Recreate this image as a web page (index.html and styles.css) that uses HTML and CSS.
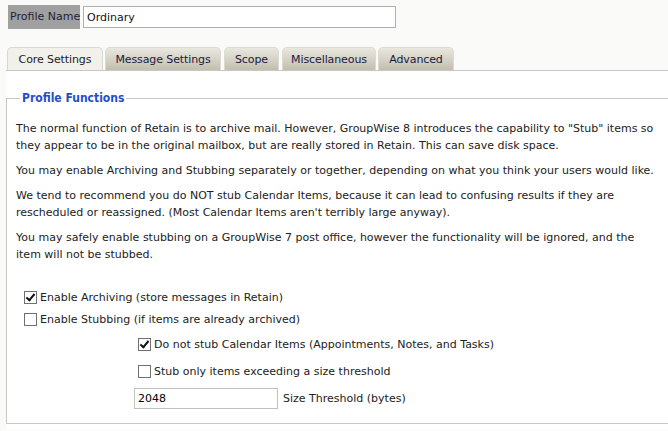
FILE: index.html
```html
<!DOCTYPE html>
<html>
<head>
<meta charset="utf-8">
<link rel="stylesheet" href="styles.css">
</head>
<body>
<div class="top">
  <label class="name-label">Profile Name</label>
  <input class="name-input" type="text" value="Ordinary">
</div>
<div class="tabs">
  <div class="tab active t-core">Core Settings</div>
  <div class="tab t-msg">Message Settings</div>
  <div class="tab t-scope">Scope</div>
  <div class="tab t-misc">Miscellaneous</div>
  <div class="tab t-adv">Advanced</div>
</div>
<div class="panel">
  <fieldset class="group">
    <legend>Profile Functions</legend>
    <p>The normal function of Retain is to archive mail. However, GroupWise 8 introduces the capability to "Stub" items so they appear to be in the original mailbox, but are really stored in Retain. This can save disk space.</p>
    <p>You may enable Archiving and Stubbing separately or together, depending on what you think your users would like.</p>
    <p>We tend to recommend you do NOT stub Calendar Items, because it can lead to confusing results if they are rescheduled or reassigned. (Most Calendar Items aren't terribly large anyway).</p>
    <p>You may safely enable stubbing on a GroupWise 7 post office, however the functionality will be ignored, and the item will not be stubbed.</p>
    <div class="options">
      <label class="opt first"><span class="cb checked"></span>Enable Archiving (store messages in Retain)</label>
      <label class="opt"><span class="cb"></span>Enable Stubbing (if items are already archived)</label>
      <div class="sub">
        <label class="opt sub1"><span class="cb checked"></span>Do not stub Calendar Items (Appointments, Notes, and Tasks)</label>
        <label class="opt sub2"><span class="cb"></span>Stub only items exceeding a size threshold</label>
        <div class="threshold"><input class="size-input" type="text" value="2048"><span>Size Threshold (bytes)</span></div>
      </div>
    </div>
  </fieldset>
</div>
</body>
</html>
```

FILE: styles.css
```css
html, body {
  margin: 0;
  padding: 0;
  overflow: hidden;
  background: #fafaf8;
  font-family: "DejaVu Sans", Verdana, sans-serif;
  font-size: 11px;
  color: #222;
}
.top {
  display: flex;
  align-items: center;
  padding: 5px 0 0 8px;
  height: 24px;
}
.name-label {
  background: #a0a0a0;
  color: #1e1e3c;
  height: 24px;
  line-height: 24px;
  padding: 0 3px 0 2px;
  width: 67px;
  white-space: nowrap;
}
.name-input {
  margin-left: 3px;
  width: 305px;
  height: 18px;
  border: 1px solid #b0b0b0;
  padding: 1px 3px;
  font: inherit;
  color: #111;
  background: #fff;
}
.tabs {
  display: flex;
  margin-top: 18px;
  padding-left: 7px;
  height: 23px;
}
.tab {
  height: 23px;
  line-height: 23px;
  text-align: center;
  border: 1px solid #dcdad2;
  border-bottom: none;
  border-radius: 5px 5px 0 0;
  background: linear-gradient(#e9e7df, #c3beae);
  color: #1a1a40;
  box-sizing: border-box;
  white-space: nowrap;
  letter-spacing: -0.1px;
}
.tab.active {
  background: #f1f0ea;
  border-color: #d8d8d4;
  color: #222;
}
.t-core { width: 96px; }
.t-msg { width: 116px; margin-left: 2px; }
.t-scope { width: 55px; margin-left: 3px; }
.t-misc { width: 94px; margin-left: 3px; }
.t-adv { width: 76px; margin-left: 2px; }
.panel {
  margin-left: 6px;
  width: 662px;
  background: #fff;
  border-top: 1px solid #c8c8c8;
  height: 359px;
}
.group {
  box-sizing: border-box;
  margin: 20px 0 0 0;
  border: 1px solid #c8c8c8;
  border-right: none;
  padding: 15px 0 0 9px;
  height: 333px;
}
.group legend {
  color: #1f4fcc;
  font-family: "DejaVu Sans Condensed", "DejaVu Sans", sans-serif;
  font-weight: bold;
  font-size: 12px;
  padding: 0 2px;
  margin-left: 4px;
}
p {
  margin: 0 0 8px 0;
  line-height: 17px;
  width: 645px;
}
.options {
  margin-top: 23px;
}
.opt {
  display: flex;
  align-items: center;
  height: 22px;
  margin-left: 8px;
}
.cb {
  display: inline-block;
  width: 11px;
  height: 11px;
  border: 1px solid #707070;
  background: #fff;
  margin-right: 3px;
  position: relative;
}
.cb.checked::after {
  content: "";
  position: absolute;
  left: 3px;
  top: 0px;
  width: 3px;
  height: 7px;
  border: solid #111;
  border-width: 0 2px 2px 0;
  transform: rotate(40deg);
}
.sub {
  margin-left: 114px;
}
.sub .opt {
  margin-left: 8px;
}
.sub1 {
  margin-top: 3px;
}
.sub2 {
  margin-top: 5px;
}
.threshold {
  display: flex;
  align-items: center;
  margin-top: 6px;
  margin-left: 4px;
}
.size-input {
  width: 136px;
  height: 17px;
  border: 1px solid #c0c0c0;
  padding: 1px 3px;
  font: inherit;
  margin-right: 5px;
}
```
